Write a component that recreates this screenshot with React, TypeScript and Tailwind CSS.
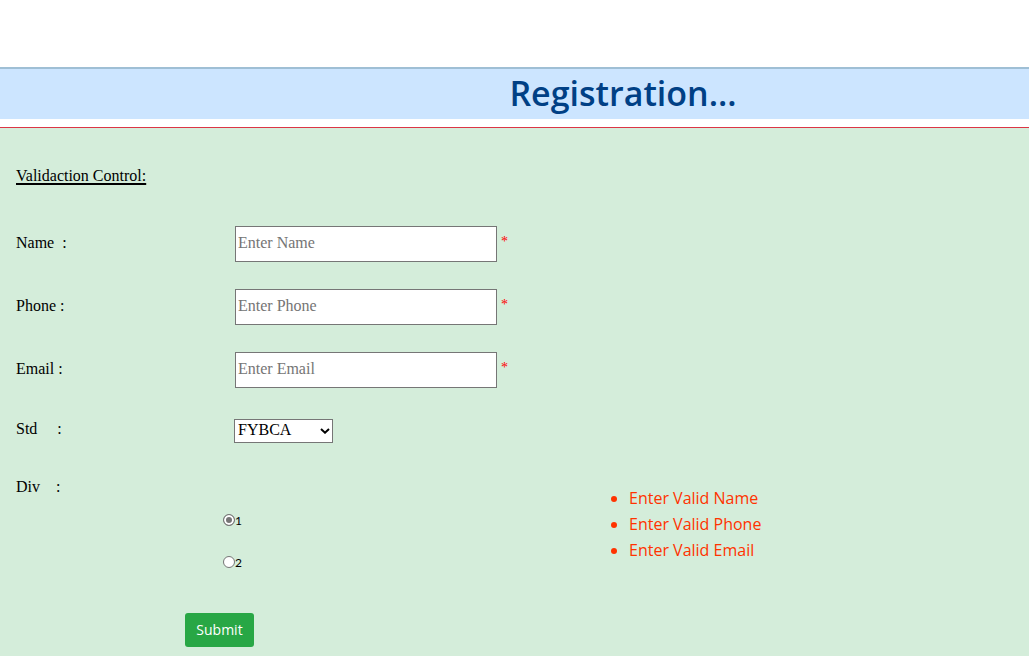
import { useState } from "react";

const fields = [
  { id: "name", label: "Name  :", placeholder: "Enter Name", type: "text" },
  { id: "phone", label: "Phone :", placeholder: "Enter Phone", type: "tel" },
  { id: "email", label: "Email :", placeholder: "Enter Email", type: "email" },
];

const errors = ["Enter Valid Name", "Enter Valid Phone", "Enter Valid Email"];

export default function App() {
  const [division, setDivision] = useState("1");

  return (
    <div className="flex min-h-screen flex-col bg-white pt-[67px] font-['Open_Sans','Noto_Sans',sans-serif]">
      <header className="mb-2 border-t-2 border-[#9fbfd5] bg-[#cce5ff] pl-[217px] text-center">
        <h1 className="pb-0.5 text-[34px] leading-[48px] font-semibold text-[#004085]">Registration...</h1>
      </header>

      <main className="grow border-t border-[#dc3545] bg-[#d4edda] px-4 pt-9 pb-[9px]">
        <form
          className="font-['Gabriola','Liberation_Serif',serif] text-[16px] leading-6 text-black"
          onSubmit={(event) => event.preventDefault()}
          noValidate
        >
          <h2 className="mb-[38px] underline decoration-2 underline-offset-2">Validaction Control:</h2>

          <div className="flex flex-col gap-[27px]">
            {fields.map((field) => (
              <div key={field.id} className="flex h-9 items-start">
                <label htmlFor={field.id} className="w-[219px] shrink-0 pt-[5px] whitespace-pre">
                  {field.label}
                </label>
                <input
                  id={field.id}
                  type={field.type}
                  placeholder={field.placeholder}
                  className="h-9 w-[262px] border border-[#767676] bg-white px-0.5 pb-0.5 placeholder:text-[#757575]"
                />
                <span className="pt-1 pl-1 text-[14px] text-[#ff0000]">*</span>
              </div>
            ))}
          </div>

          <div className="mt-[31px] flex h-6 items-start">
            <label htmlFor="std" className="w-[218px] shrink-0 leading-5 whitespace-pre">
              {"Std     :"}
            </label>
            <div className="relative">
              <select
                id="std"
                className="block h-6 w-[99px] appearance-none border border-[#767676] bg-white pb-0.5 pl-[3px] leading-5"
              >
                <option>FYBCA</option>
                <option>SYBCA</option>
                <option>TYBCA</option>
              </select>
              <svg
                viewBox="0 0 10 6"
                className="pointer-events-none absolute top-[9px] right-[3px] h-[6px] w-[10px]"
                fill="none"
                stroke="black"
                strokeWidth="2"
                aria-hidden="true"
              >
                <path d="M1 1 L5 4.7 L9 1" />
              </svg>
            </div>
          </div>

          <div className="mt-8 flex items-start">
            <div className="w-[574px] shrink-0">
              <fieldset>
                <legend className="whitespace-pre">{"Div    :"}</legend>
                <div className="mt-[9px] ml-[207px] flex flex-col gap-[18px] text-[13px]">
                  {["1", "2"].map((value) => (
                    <label key={value} className="flex h-6 items-center">
                      <input
                        type="radio"
                        name="division"
                        value={value}
                        checked={division === value}
                        onChange={() => setDivision(value)}
                        className="size-3 appearance-none rounded-full border border-[#767676] bg-white checked:border-[#767676] checked:bg-[#767676] checked:shadow-[inset_0_0_0_2px_white]"
                      />
                      <span className="pt-0.5 font-['Lato',sans-serif] text-[12px]">{value}</span>
                    </label>
                  ))}
                </div>
              </fieldset>
              <button
                type="submit"
                className="mt-[39px] ml-[169px] block h-[34px] w-[69px] rounded-[3px] bg-[#28a745] font-['Open_Sans','Noto_Sans',sans-serif] text-[14px] text-white"
              >
                Submit
              </button>
            </div>
            <ul
              role="alert"
              className="mt-[10px] list-disc pl-[39px] font-['Open_Sans','Noto_Sans',sans-serif] text-[16px] leading-[26px] text-[#ff3300]"
            >
              {errors.map((error) => (
                <li key={error}>{error}</li>
              ))}
            </ul>
          </div>
        </form>
      </main>
    </div>
  );
}
